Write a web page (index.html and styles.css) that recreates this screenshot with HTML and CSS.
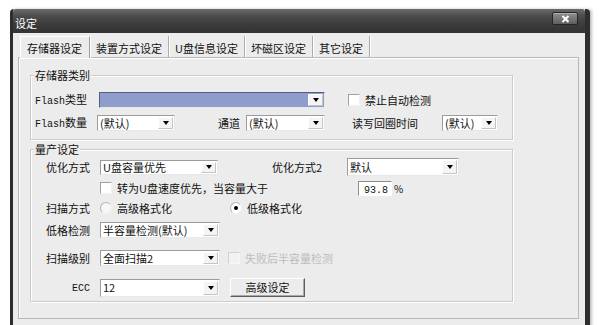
FILE: index.html
```html
<!DOCTYPE html>
<html lang="zh-CN">
<head>
  <meta charset="UTF-8">
  <meta name="viewport" content="width=device-width, initial-scale=1.0">
  <title>设定</title>
  <link rel="stylesheet" href="styles.css">
</head>
<body>
<div class="window">
  <div class="titlebar">
    <span class="title">设定</span>
    <div class="close-btn">
      <svg width="9" height="8" viewBox="0 0 9 8">
        <path d="M1.5 1 L7.5 7 M7.5 1 L1.5 7" stroke="#fff" stroke-width="2" fill="none"/>
      </svg>
    </div>
  </div>

  <div class="client">
    <div class="tabs">
      <div class="tab active">存储器设定</div>
      <div class="tab">装置方式设定</div>
      <div class="tab">U盘信息设定</div>
      <div class="tab">坏磁区设定</div>
      <div class="tab">其它设定</div>
    </div>

    <div class="panel">
      <fieldset class="group group-storage">
        <legend>存储器类别</legend>
        <div class="row">
          <span class="lbl w64"><span class="mono">Flash</span>类型</span>
          <div class="combo combo-flash w226"><span class="combo-text"></span><span class="arrow"></span></div>
          <span class="check ml23"><span class="box"></span>禁止自动检测</span>
        </div>
        <div class="row row-gap7">
          <span class="lbl w62"><span class="mono">Flash</span>数量</span>
          <div class="combo w78"><span class="combo-text">(默认)</span><span class="arrow"></span></div>
          <span class="lbl ml43 w28">通道</span>
          <div class="combo w79"><span class="combo-text">(默认)</span><span class="arrow"></span></div>
          <span class="lbl ml27 w90">读写回圈时间</span>
          <div class="combo w56"><span class="combo-text">(默认)</span><span class="arrow"></span></div>
        </div>
      </fieldset>

      <fieldset class="group group-mass">
        <legend>量产设定</legend>
        <div class="row row-tall">
          <span class="lbl-r">优化方式</span>
          <div class="combo combo-short w118"><span class="combo-text">U盘容量优先</span><span class="arrow"></span></div>
          <span class="lbl ml54 w75">优化方式2</span>
          <div class="combo combo-high w112"><span class="combo-text">默认</span><span class="arrow"></span></div>
        </div>
        <div class="row row-gap4">
          <span class="check indent"><span class="box"></span><span class="check-text">转为U盘速度优先，当容量大于</span></span>
          <span class="num-input"><span class="mono">93.8</span></span>
          <span class="unit">%</span>
        </div>
        <div class="row row-gap4">
          <span class="lbl-r">扫描方式</span>
          <span class="radio w130"><span class="dot"></span>高级格式化</span>
          <span class="radio"><span class="dot checked"></span>低级格式化</span>
        </div>
        <div class="row row-gap6">
          <span class="lbl-r">低格检测</span>
          <div class="combo w120"><span class="combo-text">半容量检测(默认)</span><span class="arrow"></span></div>
        </div>
        <div class="row row-gap12">
          <span class="lbl-r">扫描级别</span>
          <div class="combo w120"><span class="combo-text">全面扫描2</span><span class="arrow"></span></div>
          <span class="check disabled ml8"><span class="box"></span>失败后半容量检测</span>
        </div>
        <div class="row row-gap12 row-btn">
          <span class="lbl-r"><span class="mono">ECC</span></span>
          <div class="combo combo-high w120"><span class="combo-text">12</span><span class="arrow"></span></div>
          <button class="btn">高级设定</button>
        </div>
      </fieldset>
    </div>
  </div>
</div>
</body>
</html>
```

FILE: styles.css
```css
* {
  box-sizing: border-box;
  margin: 0;
  padding: 0;
}

body {
  width: 599px;
  height: 325px;
  overflow: hidden;
  background: #fff;
  padding: 9px 0 0 10px;
  font-family: "Noto Sans CJK SC", "Liberation Sans", sans-serif;
  font-size: 11px;
  color: #111;
}

.window {
  width: 580px;
  height: 330px;
  background: #ececec;
  border-left: 3px solid #2e2e2e;
  border-right: 5px solid #2e2e2e;
  border-radius: 4px 4px 0 0;
  box-shadow: 2px 0 3px rgba(0, 0, 0, 0.25);
  display: flex;
  flex-direction: column;
}

/* title bar */
.titlebar {
  height: 24px;
  flex: none;
  display: flex;
  align-items: flex-start;
  background: linear-gradient(#6a6a6a 0, #4c4c4c 30%, #3b3b3b 65%, #333 100%);
  border-radius: 3px 3px 0 0;
}

.title {
  color: #fff;
  line-height: 12px;
  margin: 8px 0 0 2px;
}

.close-btn {
  margin: 3px 7px 0 auto;
  width: 26px;
  height: 13px;
  display: flex;
  align-items: center;
  justify-content: center;
  background: linear-gradient(#8f8f8f, #5f5f5f);
  border: 1px solid #262626;
  border-radius: 2px;
  box-shadow: inset 0 1px 0 rgba(255, 255, 255, 0.3);
}

/* tabs */
.client {
  flex: 1;
  padding: 3px 6px 0 5px;
}

.tabs {
  display: flex;
  height: 21px;
  padding-left: 2px;
  position: relative;
  z-index: 1;
}

.tab {
  height: 21px;
  padding: 4px 6px 0;
  line-height: 17px;
  border-right: 1px solid #acacac;
  box-shadow: 1px 0 0 #fff;
  white-space: nowrap;
}

.tab.active {
  height: 22px;
  padding: 3px 7px 0 6px;
  background: #ececec;
  border-left: 1px solid #fff;
  border-top: 1px solid #fff;
  border-right-color: #9c9c9c;
}

.panel {
  height: 262px;
  border: 1px solid #b8b8b8;
  box-shadow: inset 1px 1px 0 #fff;
  padding: 11px 0 0 11px;
  background: #ececec;
}

/* group boxes */
.group {
  width: 483px;
  border: 1px solid #cbcbcb;
  box-shadow: inset 1px 1px 0 #fff, 1px 1px 0 #fff;
}

.group legend {
  padding: 0 1px;
  margin-left: -1px;
  line-height: 13px;
  background: #ececec;
}

.group-storage {
  padding: 10px 4px 8px;
}

.group-mass {
  margin-top: 3px;
  padding: 2px 4px 4px;
}

.row {
  display: flex;
  align-items: center;
  height: 16px;
  white-space: nowrap;
}

.row-tall { height: 18px; }
.row-btn { height: 19px; }
.row-gap4 { margin-top: 4px; }
.row-gap6 { margin-top: 6px; }
.row-gap7 { margin-top: 7px; }
.row-gap12 { margin-top: 12px; }

.lbl {
  display: inline-block;
  line-height: 14px;
}

.lbl-r {
  display: inline-block;
  width: 65px;
  padding-right: 10px;
  text-align: right;
  line-height: 14px;
}

.mono {
  font-family: "Liberation Mono", monospace;
  font-size: 10px;
}

.w28 { width: 28px; }
.w56 { width: 56px; }
.w62 { width: 62px; }
.w64 { width: 64px; }
.w75 { width: 75px; }
.w78 { width: 78px; }
.w79 { width: 79px; }
.w90 { width: 90px; }
.w112 { width: 112px; }
.w118 { width: 118px; }
.w120 { width: 120px; }
.w130 { width: 130px; }
.w226 { width: 226px; }
.ml8 { margin-left: 8px; }
.ml23 { margin-left: 23px; }
.ml27 { margin-left: 27px; }
.ml43 { margin-left: 43px; }
.ml54 { margin-left: 54px; }

/* combo boxes */
.combo {
  display: flex;
  align-items: stretch;
  height: 16px;
  background: #fff;
  border: 1px solid;
  border-color: #9c9c9c #e8e8e8 #e8e8e8 #9c9c9c;
  padding-left: 2px;
}

.combo-short { height: 15px; }
.combo-high { height: 18px; }

.combo-text {
  flex: 1;
  display: flex;
  align-items: center;
  line-height: 13px;
}

.combo-flash {
  background: #8e9dcb;
  border-color: #55607e #e8e8e8 #e8e8e8 #55607e;
  padding-left: 0;
}

.arrow {
  width: 15px;
  margin: 1px;
  background: #f4f4f4;
  border: 1px solid;
  border-color: #fff #c4c4c4 #c4c4c4 #fff;
  display: flex;
  align-items: center;
  justify-content: center;
}

.arrow::before {
  content: "";
  border-left: 3px solid transparent;
  border-right: 3px solid transparent;
  border-top: 4px solid #000;
}

/* checkboxes and radios */
.check,
.radio {
  display: inline-flex;
  align-items: center;
  line-height: 14px;
}

.indent { margin-left: 65px; }

.box {
  width: 12px;
  height: 12px;
  margin-right: 5px;
  background: #fff;
  border: 1px solid;
  border-color: #a2a2a2 #f2f2f2 #f2f2f2 #a2a2a2;
}

.check-text {
  display: inline-block;
  width: 241px;
}

.check.disabled {
  color: #bdbdbd;
}

.check.disabled .box {
  background: #f2f2f2;
  border-color: #cfcfcf #f6f6f6 #f6f6f6 #cfcfcf;
}

.dot {
  width: 12px;
  height: 12px;
  margin-right: 5px;
  border-radius: 50%;
  background: #f7f7f7;
  border: 1px solid;
  border-color: #b4b4b4 #f0f0f0 #f0f0f0 #b4b4b4;
  display: flex;
  align-items: center;
  justify-content: center;
}

.dot.checked {
  background: #fff;
}

.dot.checked::before {
  content: "";
  width: 4px;
  height: 4px;
  border-radius: 50%;
  background: #000;
}

.num-input {
  width: 34px;
  height: 15px;
  background: #fff;
  border: 1px solid;
  border-color: #8c8c8c #fff #fff #8c8c8c;
  text-align: right;
  padding-right: 3px;
  line-height: 13px;
}

.unit {
  margin-left: 2px;
  font-size: 10px;
}

.btn {
  margin-left: 10px;
  width: 75px;
  height: 19px;
  background: #ececec;
  border: 1px solid;
  border-color: #fff #5e5e5e #5e5e5e #fff;
  box-shadow: inset -1px -1px 0 #a9a9a9;
  font-family: inherit;
  font-size: 11px;
  color: #111;
  line-height: 15px;
}
```
